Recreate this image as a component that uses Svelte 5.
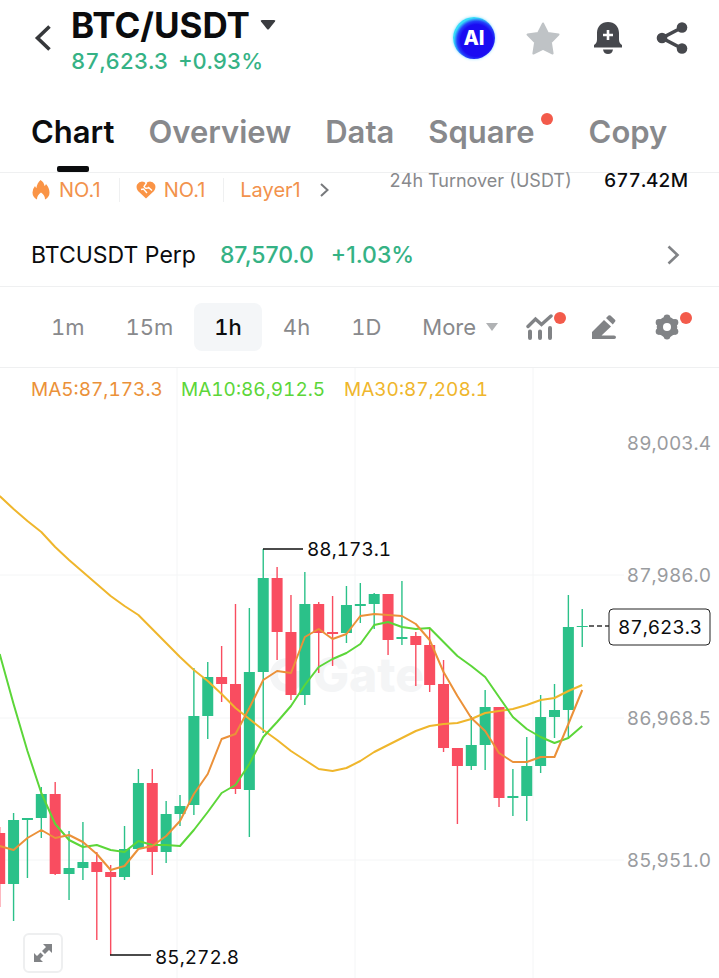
<script lang="ts">
  type Candle = [high: number, top: number, bottom: number, low: number, up: 0 | 1];

  const tabs = ['Chart', 'Overview', 'Data', 'Square', 'Copy'];
  const intervals = ['1m', '15m', '1h', '4h', '1D'];

  let activeTab = $state('Chart');
  let activeInterval = $state('1h');

  const step = 13.87;
  const x = (i: number) => i * step - 0.3;

  const candles: Candle[] = [
    [827, 833, 884, 907, 0],
    [813, 820, 884, 921, 1],
    [818, 818, 820, 878, 1],
    [787, 794, 818, 838, 1],
    [782, 794, 874, 875, 0],
    [831, 868, 874, 900, 1],
    [822, 862, 868, 880, 1],
    [852, 862, 872, 940, 0],
    [865, 872, 877, 955, 0],
    [826, 849, 877, 880, 1],
    [769, 783, 849, 849, 1],
    [769, 783, 852, 875, 0],
    [801, 814, 852, 863, 1],
    [795, 806, 814, 826, 1],
    [668, 716, 805, 815, 1],
    [662, 677, 716, 739, 1],
    [646, 677, 684, 702, 0],
    [604, 684, 789, 794, 0],
    [608, 672, 790, 837, 1],
    [549, 578, 672, 733, 1],
    [567, 578, 632, 660, 0],
    [595, 632, 695, 700, 0],
    [572, 604, 695, 705, 1],
    [602, 604, 633, 673, 0],
    [596, 632, 634, 666, 0],
    [586, 605, 633, 643, 1],
    [583, 604, 606, 623, 1],
    [593, 594, 604, 629, 1],
    [594, 594, 640, 655, 0],
    [581, 637, 639, 645, 1],
    [632, 636, 645, 686, 0],
    [628, 645, 685, 692, 0],
    [660, 684, 748, 752, 0],
    [748, 748, 766, 824, 0],
    [716, 745, 766, 770, 1],
    [690, 707, 745, 770, 1],
    [707, 707, 798, 807, 0],
    [769, 796, 798, 816, 1],
    [737, 766, 796, 821, 1],
    [695, 717, 766, 773, 1],
    [684, 710, 717, 738, 1],
    [595, 627, 710, 739, 1],
    [609, 626, 627, 647, 1],
  ];

  const averages = [
    {
      label: 'MA30:87,208.1',
      color: '#efb62c',
      values: [
        496, 509, 521, 532, 547, 560, 572, 584, 596, 606, 615, 629, 643, 657, 670, 681, 694, 708,
        719, 730, 740, 751, 760, 769, 771, 768, 761, 752, 745, 738, 731, 726, 724, 723, 719, 713,
        711, 709, 705, 700, 698, 691, 685,
      ],
    },
    {
      label: 'MA10:86,912.5',
      color: '#5cd639',
      values: [
        654, 704, 751, 793, 824, 840, 847, 845, 850, 852, 841, 845, 845, 846, 830, 812, 793, 785,
        764, 737, 722, 706, 685, 667, 659, 653, 644, 625, 622, 627, 629, 628, 642, 656, 666, 677,
        697, 717, 729, 737, 743, 738, 726,
      ],
    },
    {
      label: 'MA5:87,173.3',
      color: '#eb9139',
      values: [
        846, 850, 838, 830, 838, 835, 842, 854, 870, 866, 849, 846, 836, 821, 794, 774, 739, 734,
        708, 680, 671, 673, 637, 629, 639, 634, 616, 614, 615, 616, 624, 640, 672, 696, 718, 731,
        753, 762, 762, 757, 757, 724, 690,
      ],
    },
  ];
  const legend = [...averages].reverse();

  const axis = [
    { label: '89,003.4', y: 443 },
    { label: '87,986.0', y: 575 },
    { label: '86,968.5', y: 718 },
    { label: '85,951.0', y: 860 },
  ];

  const points = (values: number[]) => values.map((y, i) => `${x(i)},${y}`).join(' ');
</script>

<main>
  <header>
    <button class="back" aria-label="Back">
      <svg width="18" height="28" viewBox="0 0 18 28"><path d="M16.500 2.500 4.500 14l12 11.500" fill="none" stroke="#36383b" stroke-width="3.600" /></svg>
    </button>
    <div class="pair">
      <button class="symbol">
        <h1>BTC/USDT</h1>
        <svg width="16" height="10" viewBox="0 0 16 10"><path d="M2 0h12q2 0 1 1.500L9 9q-1 1-2 0L1 1.500Q0 0 2 0z" fill="#3a3c40" /></svg>
      </button>
      <div class="quote"><span>87,623.3</span><span>+0.93%</span></div>
    </div>
    <div class="actions">
      <button aria-label="AI assistant" class="ai"><span>AI</span></button>
      <button aria-label="Favorite">
        <svg width="36" height="34" viewBox="0 0 36 34"><path d="M18 2.500 22.800 12l10.700 1.600-7.600 7.700 1.700 11.200L18 27.900l-9.600 4.600 1.700-11.200-7.600-7.700L13.200 12z" fill="#bfc3c6" stroke="#bfc3c6" stroke-width="2" stroke-linejoin="round" /></svg>
      </button>
      <button aria-label="Price alert">
        <svg width="34" height="34" viewBox="-2 0 34 34">
          <path d="M15 1C8.500 1 4 5.500 4 12v6.500Q4 22 1 24v2.500h28V24q-3-2-3-5.500V12C26 5.500 21.500 1 15 1zM10 28.500h10q-.8 4.500-5 4.500t-5-4.500z" fill="#46484d" />
          <path d="M15 9v10M10 14h10" stroke="#fff" stroke-width="2.600" />
        </svg>
      </button>
      <button aria-label="Share">
        <svg width="34" height="34" viewBox="-1 0 34 34">
          <path d="M26 6.500 6 17l20 10.500" fill="none" stroke="#46484d" stroke-width="3.600" />
          <g fill="#46484d"><circle cx="26" cy="6.500" r="5.300" /><circle cx="6" cy="17" r="5.300" /><circle cx="26" cy="27.500" r="5.300" /></g>
        </svg>
      </button>
    </div>
  </header>

  <nav class="tabs">
    {#each tabs as tab}
      <button class:active={activeTab === tab} class:unread={tab === 'Square'} onclick={() => (activeTab = tab)}>
        {tab}
        {#if tab === 'Square'}<i class="dot"></i>{/if}
      </button>
    {/each}
  </nav>

  <section class="summary">
    <div class="tags">
      <a href="#hot">
        <svg width="20" height="20" viewBox="0 0 20 20"><path d="M9.500 0q3.500 2 4 6 1-.5 1.500-2Q18.500 8 18.500 12.500 18.500 17 14 19.500q.2-4-4-7-4.200 3-4 7Q1.500 17 1.500 12.500 1.500 9 4 6q.5 1.500 1.500 2Q6 3 9.500 0z" fill="#fa9446" /></svg>
        NO.1
      </a>
      <a href="#favorites">
        <svg width="20" height="18" viewBox="0 0 20 18">
          <path d="M10 17.500 2 10Q-.5 6.500 1.300 3.300 3 .5 6 .5q2.500 0 4 2 1.500-2 4-2 3 0 4.700 2.800Q20.500 6.500 18 10z" fill="#fa9446" />
          <path d="M10.500 2 8 5.500q1.500 3 4.500 1l3.500 3M5 8.500l2.500-.5 3.500 4" fill="none" stroke="#fff" stroke-width="1.400" />
        </svg>
        NO.1
      </a>
      <a href="#layer1">
        Layer1
        <svg class="next" width="9" height="14" viewBox="0 0 9 14"><path d="M1 1l6.500 6L1 13" fill="none" stroke="#77797c" stroke-width="2" /></svg>
      </a>
    </div>
    <dl>
      <dt>24h Turnover (USDT)</dt>
      <dd>677.42M</dd>
    </dl>
  </section>

  <a class="perp" href="#perp">
    <span>BTCUSDT Perp</span>
    <span class="up">87,570.0</span>
    <span class="up change">+1.03%</span>
    <svg width="13" height="20" viewBox="0 0 13 20"><path d="M1.500 1.500l9 8.500-9 8.500" fill="none" stroke="#818386" stroke-width="2.600" /></svg>
  </a>

  <div class="toolbar">
    <div class="intervals">
      {#each intervals as interval}
        <button class:active={activeInterval === interval} onclick={() => (activeInterval = interval)}>{interval}</button>
      {/each}
      <button class="more">
        More
        <svg width="12" height="8" viewBox="0 0 12 8"><path d="M0 0h12L6 8z" fill="#b0b2b4" /></svg>
      </button>
    </div>
    <div class="tools">
      <button aria-label="Indicators">
        <svg width="28" height="26" viewBox="0 0 28 26">
          <path d="M2 12.500 9.500 5l6 5.500L25 2" fill="none" stroke="#818386" stroke-width="3.400" stroke-linecap="round" />
          <path d="M4 17.500v6.500M14 17.500v6.500M24 14v10" stroke="#818386" stroke-width="4" stroke-linecap="round" />
        </svg>
        <i class="dot"></i>
      </button>
      <button aria-label="Draw">
        <svg width="26" height="26" viewBox="0 0 26 26">
          <path d="M1 25v-7L13 6l7 6.500L10.500 21.500H23q2 0 2 1.800T23 25z" fill="#818386" />
          <path d="M15 4l2.500-2.400q1-.9 2 0l4.500 4.200q1 1 0 2L21.800 10.500z" fill="#818386" />
        </svg>
      </button>
      <button aria-label="Settings">
        <svg width="26" height="26" viewBox="0 0 26 26">
          <g fill="#818386"><circle cx="13" cy="13" r="10.300" /><circle cx="13" cy="3.800" r="3.300" /><circle cx="21" cy="8.400" r="3.300" /><circle cx="21" cy="17.600" r="3.300" /><circle cx="13" cy="22.200" r="3.300" /><circle cx="5" cy="17.600" r="3.300" /><circle cx="5" cy="8.400" r="3.300" /></g>
          <circle cx="13" cy="13" r="4" fill="#fff" />
        </svg>
        <i class="dot"></i>
      </button>
    </div>
  </div>

  <section class="chart">
    <svg class="plot" viewBox="0 368 719 610" role="img" aria-label="BTC/USDT hourly candlestick chart">
      <g stroke="#f4f5f6">
        {#each [177, 355, 533] as gx}
          <line x1={gx} x2={gx} y1="368" y2="978" />
        {/each}
        {#each axis.slice(1) as tick}
          <line x1="0" x2="624" y1={tick.y} y2={tick.y} />
        {/each}
      </g>

      <g class="watermark">
        <path d="M292 663a13 13 0 1 0 8 12h-8" fill="none" stroke="#f4f5f6" stroke-width="8" />
        <text x="313" y="692">Gate</text>
      </g>

      {#each candles as [high, top, bottom, low, up], i}
        <g fill={up ? '#2bc189' : '#f94d60'}>
          <rect x={x(i) - 0.7} y={high} width="1.400" height={low - high} />
          <rect x={x(i) - 5.5} y={top} width="11" height={bottom - top} />
        </g>
      {/each}

      {#each averages as line}
        <polyline points={points(line.values)} fill="none" stroke={line.color} stroke-width="2" stroke-linejoin="round" />
      {/each}

      <g class="legend">
        {#each legend as line, i}
          <text x={[31, 181, 344][i]} y="396" fill={line.color}>{line.label}</text>
        {/each}
      </g>

      <g class="axis">
        {#each axis as tick}
          <text x="711" y={tick.y + 7}>{tick.label}</text>
        {/each}
      </g>

      <g class="marks">
        <path d="M263 549h40M110 955h41" stroke="#111" stroke-width="1.300" />
        <text x="307" y="556">88,173.1</text>
        <text x="155" y="964">85,272.8</text>
        <path d="M589 626h20" stroke="#333" stroke-width="1.300" stroke-dasharray="5 3" />
        <rect x="609" y="609" width="101" height="36" rx="4" fill="#fff" stroke="#222" />
        <text x="618" y="634">87,623.3</text>
      </g>
    </svg>
    <button class="expand" aria-label="Expand chart">
      <svg width="20" height="20" viewBox="0 0 20 20">
        <path d="M10 1h9v9l-3-3-4 4-3-3 4-4zM1 10l3 3 3.500-3.500 3 3L7 16l3 3H1z" fill="#818386" />
      </svg>
    </button>
  </section>
</main>

<style>
  :global(body) {
    background: #fff;
  }
  main {
    font-family: Inter, 'Liberation Sans', sans-serif;
    color: #0b0c0e;
    overflow: hidden;
  }
  button {
    position: relative;
    display: flex;
    align-items: center;
    padding: 0;
    border: 0;
    background: none;
    color: inherit;
    font: inherit;
    font-variant-numeric: inherit;
    cursor: pointer;
  }
  a {
    color: inherit;
    text-decoration: none;
  }
  svg {
    display: block;
    flex: none;
  }

  header {
    display: flex;
    align-items: center;
    height: 76px;
    padding: 0 30px 0 33px;
  }
  .pair {
    margin-left: 20px;
    padding-top: 7px;
    flex: 1;
  }
  .symbol {
    gap: 10px;
  }
  h1 {
    margin: 0;
    font-size: 35px;
    line-height: 38px;
    font-weight: 700;
  }
  .quote {
    display: flex;
    gap: 10px;
    font-size: 22px;
    line-height: 34px;
    font-weight: 500;
    font-variant-numeric: tabular-nums;
    color: #35b285;
  }
  .actions {
    display: flex;
    align-items: center;
    gap: 30px;
  }
  .ai {
    justify-content: center;
    width: 42px;
    height: 42px;
    border-radius: 50%;
    background: radial-gradient(circle at 56% 56%, #1a0cf2 0 48%, #2440fa 58%, #37dcf8 68%);
    box-shadow: 0 0 3px #7fd8ff;
    color: #fff;
    font-size: 20px;
    font-weight: 800;
  }

  .tabs {
    display: flex;
    gap: 34px;
    height: 96px;
    padding: 0 31px;
    border-bottom: 1px solid #eff0f1;
    font-size: 31px;
    font-weight: 600;
    color: #88898c;
  }
  .tabs button {
    padding-bottom: 15px;
    align-items: end;
    line-height: 50px;
  }
  .tabs .unread {
    padding-right: 20px;
  }
  .tabs .active {
    color: #0b0c0e;
  }
  .tabs .active::after {
    content: '';
    position: absolute;
    left: 50%;
    bottom: 0;
    width: 32px;
    height: 6px;
    margin-left: -16px;
    border-radius: 2px;
    background: #0b0c0e;
  }
  .dot {
    position: absolute;
    top: -2px;
    right: -12px;
    width: 12px;
    height: 12px;
    border-radius: 50%;
    background: #f35b4b;
  }
  .tabs .dot {
    top: 37px;
    right: 2px;
  }

  .summary {
    display: flex;
    justify-content: space-between;
    align-items: flex-start;
    height: 50px;
    padding: 0 31px;
  }
  .tags {
    display: flex;
    padding-top: 5px;
    font-size: 20px;
    line-height: 24px;
    color: #f2924c;
  }
  .tags a {
    display: flex;
    align-items: center;
    gap: 8px;
  }
  .tags a + a {
    margin-left: 18px;
    padding-left: 16px;
    border-left: 1px solid #eff0f1;
  }
  .next {
    margin-left: 11px;
  }
  dl {
    display: flex;
    gap: 32px;
    margin: 0;
    font-size: 19px;
    line-height: 16px;
    font-variant-numeric: tabular-nums;
  }
  dt {
    font-size: 18px;
    color: #88898c;
  }
  dd {
    margin: 0;
    font-weight: 500;
  }

  .perp {
    display: flex;
    align-items: center;
    height: 63px;
    padding: 0 39px 0 31px;
    border-bottom: 1px solid #eff0f1;
    font-size: 23px;
  }
  .perp .up {
    margin-left: 24px;
    font-weight: 500;
    color: #35b285;
  }
  .perp .change {
    margin-left: 17px;
  }
  .perp svg {
    margin-left: auto;
  }

  .toolbar {
    display: flex;
    align-items: center;
    justify-content: space-between;
    height: 80px;
    padding: 0 39px 0 31px;
    border-bottom: 1px solid #eff0f1;
    font-size: 22px;
    font-variant-numeric: tabular-nums;
    color: #88898c;
  }
  .intervals,
  .tools {
    display: flex;
    align-items: center;
  }
  .intervals {
    gap: 1px;
  }
  .intervals button {
    height: 48px;
    padding: 0 20px;
    border-radius: 8px;
  }
  .intervals .active {
    background: #f4f6f8;
    color: #0b0c0e;
    font-weight: 500;
  }
  .intervals .more {
    gap: 10px;
    padding-right: 0;
  }
  .tools {
    gap: 37px;
  }

  .chart {
    position: relative;
  }
  .plot {
    width: 100%;
    font-size: 19px;
    font-variant-numeric: tabular-nums;
  }
  .axis {
    fill: #9a9c9f;
    text-anchor: end;
  }
  .marks {
    fill: #0b0c0e;
  }
  .watermark {
    fill: #f4f5f6;
    font-size: 48px;
    font-weight: 800;
  }
  .expand {
    position: absolute;
    left: 23px;
    bottom: 5px;
    justify-content: center;
    width: 40px;
    height: 40px;
    border: 2px solid #eeeff0;
    border-radius: 6px;
    background: #fff;
  }
</style>
